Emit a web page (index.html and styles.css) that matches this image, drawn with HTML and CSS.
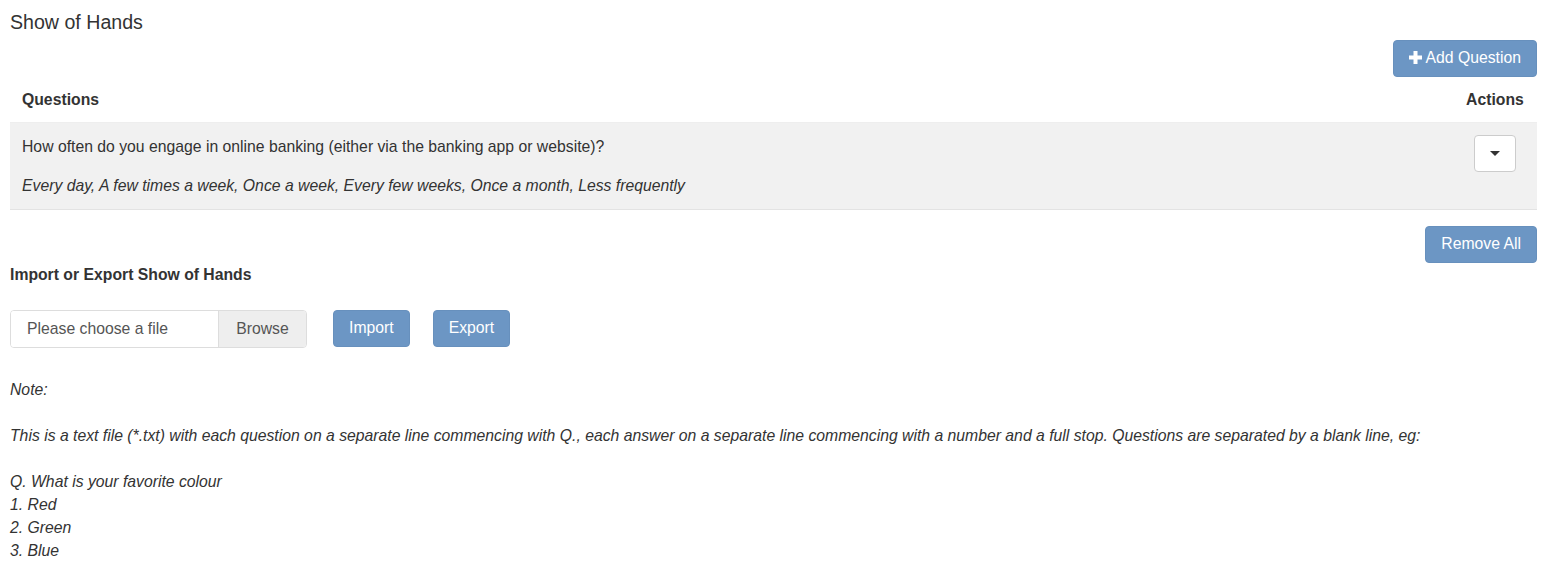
FILE: index.html
```html
<!DOCTYPE html>
<html lang="en">
<head>
    <meta charset="UTF-8">
    <meta name="viewport" content="width=device-width, initial-scale=1.0">
    <title>Show of Hands</title>
    <link rel="stylesheet" href="styles.css">
</head>
<body>
    <h1 class="page-title">Show of Hands</h1>

    <div class="toolbar">
        <button type="button" class="btn btn-primary">
            <svg class="icon-plus" width="13" height="13" viewBox="0 0 13 13"><path d="M4.5 0h4v4.5H13v4H8.5V13h-4V8.5H0v-4h4.5z" fill="#fff"/></svg>Add Question
        </button>
    </div>

    <table class="questions">
        <thead>
            <tr>
                <th class="col-question">Questions</th>
                <th class="col-actions">Actions</th>
            </tr>
        </thead>
        <tbody>
            <tr>
                <td class="col-question">
                    <p class="question-text">How often do you engage in online banking (either via the banking app or website)?</p>
                    <p class="answers">Every day, A few times a week, Once a week, Every few weeks, Once a month, Less frequently</p>
                </td>
                <td class="col-actions">
                    <button type="button" class="btn btn-default btn-caret"><span class="caret"></span></button>
                </td>
            </tr>
        </tbody>
    </table>

    <div class="toolbar remove-bar">
        <button type="button" class="btn btn-primary">Remove All</button>
    </div>

    <h2 class="section-title">Import or Export Show of Hands</h2>

    <div class="import-row">
        <div class="file-group">
            <input type="text" class="file-name" placeholder="Please choose a file" readonly>
            <span class="file-browse">Browse</span>
        </div>
        <button type="button" class="btn btn-primary">Import</button>
        <button type="button" class="btn btn-primary">Export</button>
    </div>

    <div class="note">
        <p>Note:</p>
        <p>This is a text file (*.txt) with each question on a separate line commencing with Q., each answer on a separate line commencing with a number and a full stop. Questions are separated by a blank line, eg:</p>
        <p>Q. What is your favorite colour<br>1. Red<br>2. Green<br>3. Blue</p>
    </div>
</body>
</html>
```

FILE: styles.css
```css
body {
    font-family: "Liberation Sans", Arial, sans-serif;
    font-size: 15.75px;
    line-height: 23px;
    color: #333;
    background-color: #fff;
    margin: 0;
    padding: 0 15px 0 10px;
}
.page-title {
    font-size: 19.6px;
    font-weight: normal;
    line-height: 22px;
    margin: 11px 0 7px;
}
.toolbar {
    display: flex;
    justify-content: flex-end;
}
.remove-bar {
    margin-top: 16px;
}
.btn {
    font-family: inherit;
    font-size: 15.75px;
    line-height: 22.86px;
    padding: 6px 15px;
    border: 1px solid transparent;
    border-radius: 4px;
    cursor: pointer;
}
.btn-primary {
    background-color: #6c96c4;
    border-color: #6790bd;
    color: #fff;
}
.btn-primary:hover {
    background-color: #5a84b3;
}
.icon-plus {
    margin-right: 4px;
    vertical-align: -1px;
}
.btn-default {
    background-color: #fff;
    border-color: #ccc;
    color: #333;
}
.btn-caret {
    width: 42px;
    height: 37px;
    padding: 0;
}
.caret {
    display: inline-block;
    width: 0;
    height: 0;
    border-top: 5px solid #333;
    border-left: 5px solid transparent;
    border-right: 5px solid transparent;
    vertical-align: middle;
}
.questions {
    width: 100%;
    border-collapse: collapse;
}
.questions th {
    font-weight: bold;
    text-align: left;
    padding: 11px 12px;
    border-bottom: 1px solid #eee;
}
.questions td {
    background-color: #f1f1f1;
    padding: 12px;
    vertical-align: top;
    border-bottom: 1px solid #e3e3e3;
}
.questions .col-actions {
    width: 58px;
    text-align: center;
    padding-right: 13px;
}
.question-text {
    margin: 0 0 16px;
}
.answers {
    margin: 0;
    font-style: italic;
}
.section-title {
    font-size: 15.75px;
    font-weight: bold;
    line-height: 23px;
    margin: 0;
}
.import-row {
    display: flex;
    align-items: center;
    margin-top: 24px;
}
.file-group {
    display: flex;
    width: 297px;
    height: 38px;
    border: 1px solid #ddd;
    border-radius: 4px;
    box-sizing: border-box;
    margin-right: 26px;
    overflow: hidden;
}
.file-name {
    flex: 1;
    min-width: 0;
    border: none;
    padding: 0 16px;
    font-family: inherit;
    font-size: 15.75px;
    color: #555;
    background-color: #fff;
}
.file-name::placeholder {
    color: #555;
}
.file-browse {
    width: 87px;
    background-color: #eee;
    border-left: 1px solid #ddd;
    color: #555;
    line-height: 36px;
    text-align: center;
}
.import-row .btn + .btn {
    margin-left: 23px;
}
.note {
    margin-top: 30px;
    font-style: italic;
}
.note p {
    margin: 0 0 23px;
}
```
